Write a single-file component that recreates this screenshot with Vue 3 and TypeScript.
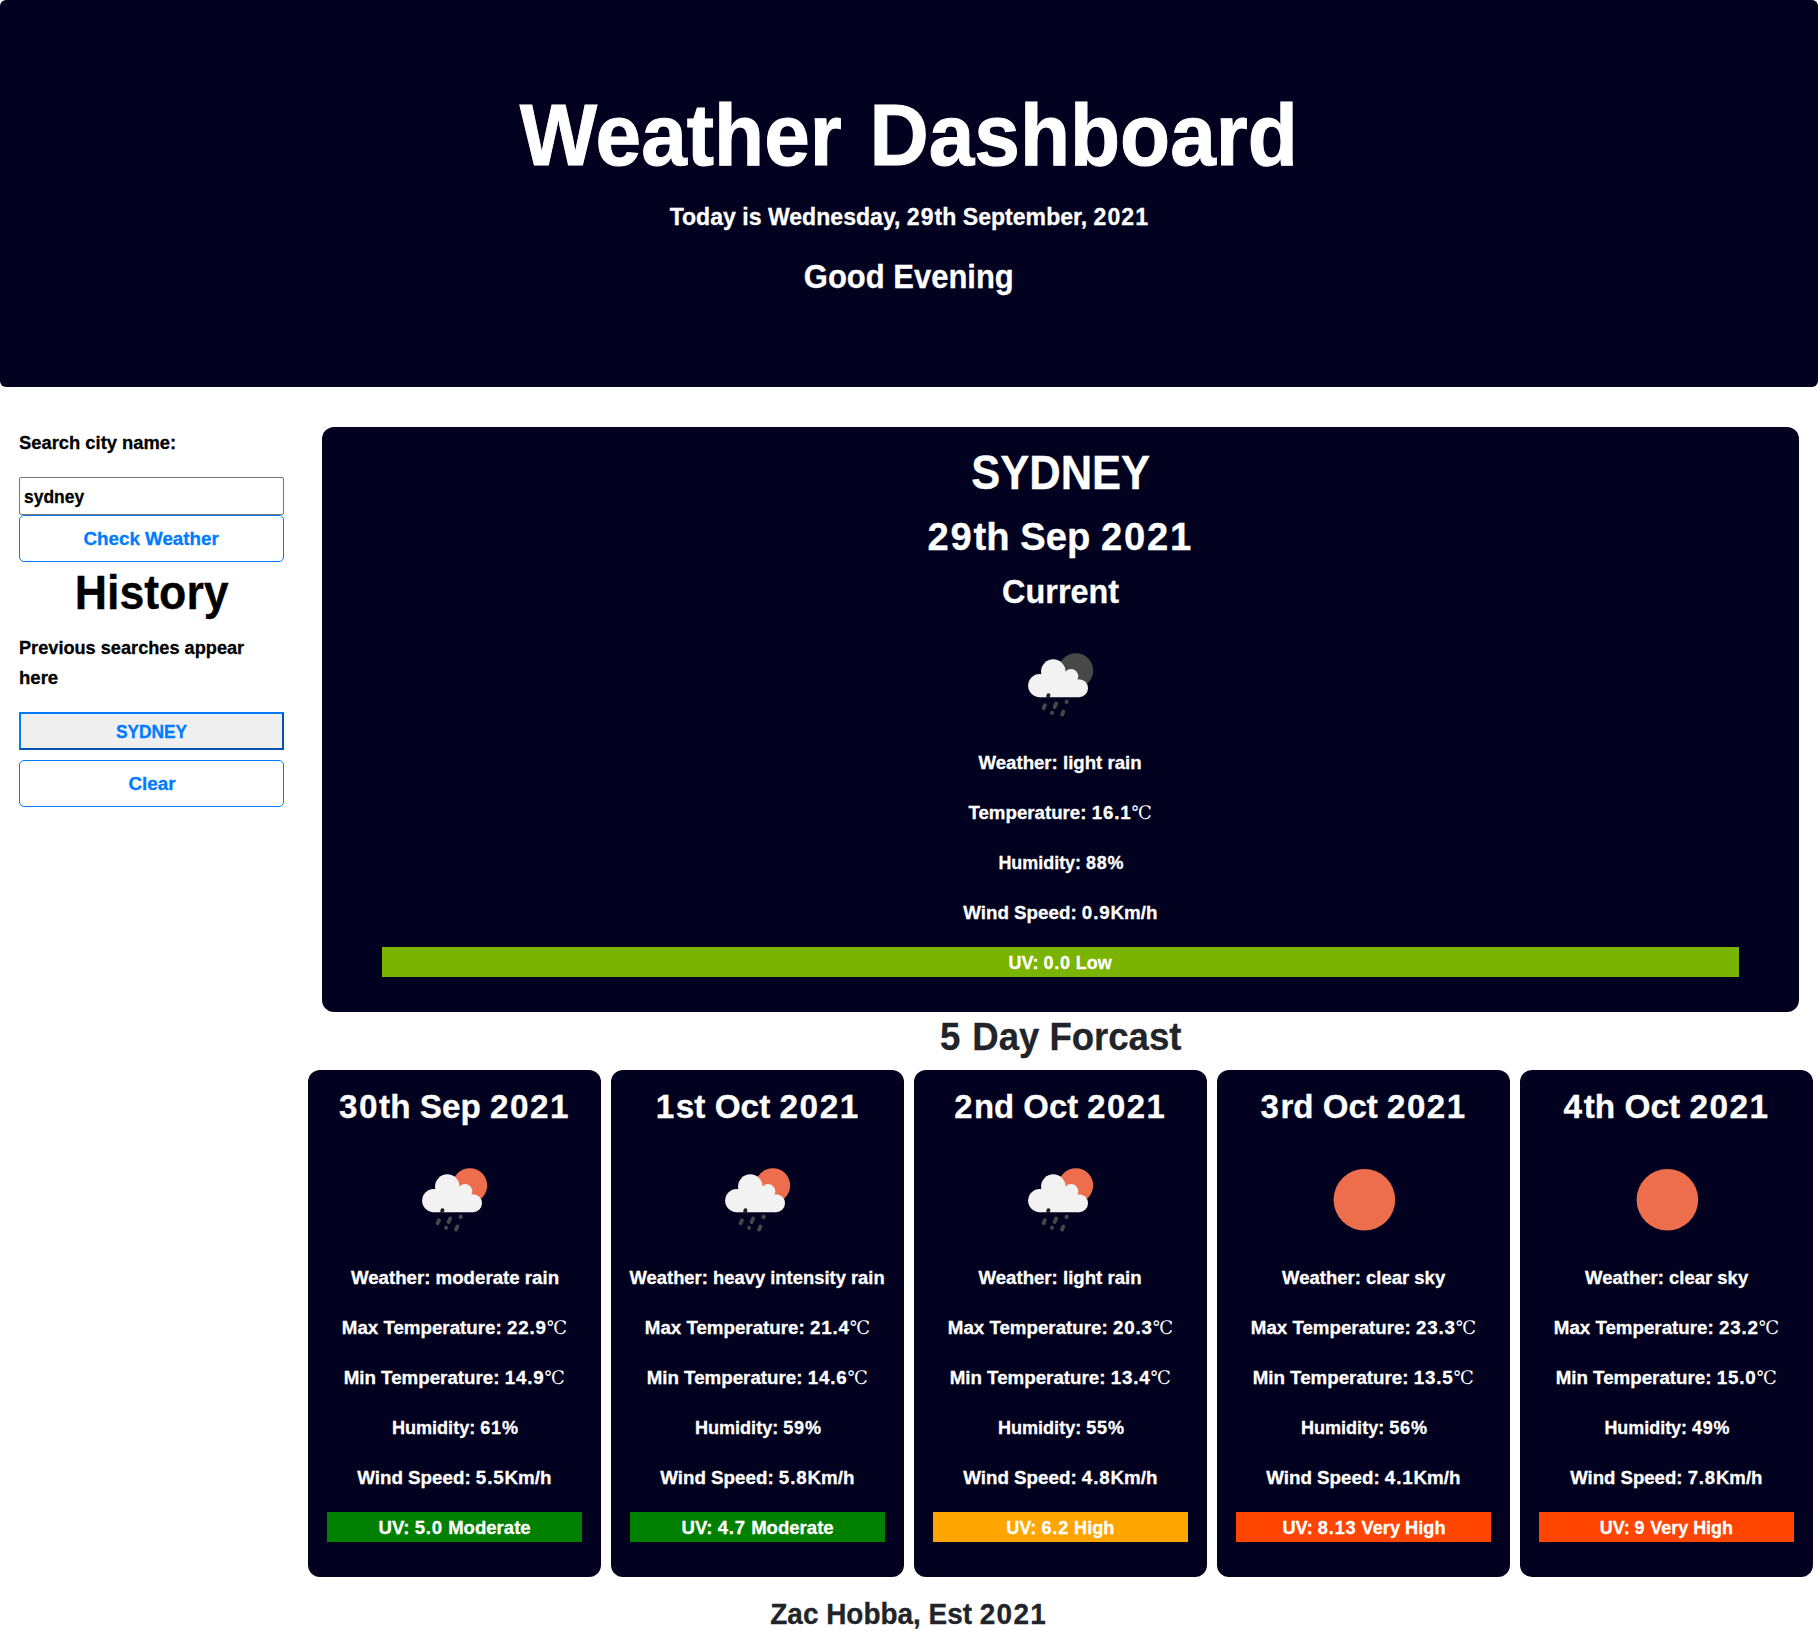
<script setup lang="ts">
import { h } from 'vue'
import type { Directive, FunctionalComponent } from 'vue'

interface Line {
  text: string
  width: number
  unit?: string
}

interface Day {
  title: Line
  icon: 'rain' | 'clear'
  lines: Line[]
  uv: Line
  color: string
}

// Condenses or widens a line of text so that it takes up the given width.
const vFit: Directive<HTMLElement, number> = {
  mounted(el, binding) {
    const size = parseFloat(getComputedStyle(el).fontSize)
    const natural = el.getBoundingClientRect().width
    const target = binding.value + size * 0.06
    el.style.transform = `scaleX(${(target / natural).toFixed(4)})`
  },
}

// A line of text whose figures are set a little wider than its letters.
const TextLine: FunctionalComponent<{ text: string; unit?: string }> = (props) =>
  h('span', { class: 'fit' }, [
    ...props.text
      .split(/(\d[\d.]*)/)
      .filter(Boolean)
      .map((part) => (/^\d/.test(part) ? h('span', { class: 'num' }, part) : part)),
    props.unit ? h('span', { class: 'unit' }, props.unit) : null,
  ])
TextLine.props = ['text', 'unit']

const current: Line[] = [
  { text: 'Weather: light rain', width: 162 },
  { text: 'Temperature: 16.1', width: 182, unit: '℃' },
  { text: 'Humidity: 88%', width: 124 },
  { text: 'Wind Speed: 0.9Km/h', width: 193 },
]

const days: Day[] = [
  {
    title: { text: '30th Sep 2021', width: 229 },
    icon: 'rain',
    lines: [
      { text: 'Weather: moderate rain', width: 207 },
      { text: 'Max Temperature: 22.9', width: 224, unit: '℃' },
      { text: 'Min Temperature: 14.9', width: 220, unit: '℃' },
      { text: 'Humidity: 61%', width: 125 },
      { text: 'Wind Speed: 5.5Km/h', width: 193 },
    ],
    uv: { text: 'UV: 5.0 Moderate', width: 151 },
    color: 'green',
  },
  {
    title: { text: '1st Oct 2021', width: 202 },
    icon: 'rain',
    lines: [
      { text: 'Weather: heavy intensity rain', width: 254 },
      { text: 'Max Temperature: 21.4', width: 224, unit: '℃' },
      { text: 'Min Temperature: 14.6', width: 220, unit: '℃' },
      { text: 'Humidity: 59%', width: 125 },
      { text: 'Wind Speed: 5.8Km/h', width: 193 },
    ],
    uv: { text: 'UV: 4.7 Moderate', width: 151 },
    color: 'green',
  },
  {
    title: { text: '2nd Oct 2021', width: 210 },
    icon: 'rain',
    lines: [
      { text: 'Weather: light rain', width: 162 },
      { text: 'Max Temperature: 20.3', width: 224, unit: '℃' },
      { text: 'Min Temperature: 13.4', width: 220, unit: '℃' },
      { text: 'Humidity: 55%', width: 125 },
      { text: 'Wind Speed: 4.8Km/h', width: 193 },
    ],
    uv: { text: 'UV: 6.2 High', width: 107 },
    color: 'orange',
  },
  {
    title: { text: '3rd Oct 2021', width: 204 },
    icon: 'clear',
    lines: [
      { text: 'Weather: clear sky', width: 162 },
      { text: 'Max Temperature: 23.3', width: 224, unit: '℃' },
      { text: 'Min Temperature: 13.5', width: 220, unit: '℃' },
      { text: 'Humidity: 56%', width: 125 },
      { text: 'Wind Speed: 4.1Km/h', width: 193 },
    ],
    uv: { text: 'UV: 8.13 Very High', width: 162 },
    color: 'orangered',
  },
  {
    title: { text: '4th Oct 2021', width: 204 },
    icon: 'clear',
    lines: [
      { text: 'Weather: clear sky', width: 162 },
      { text: 'Max Temperature: 23.2', width: 224, unit: '℃' },
      { text: 'Min Temperature: 15.0', width: 220, unit: '℃' },
      { text: 'Humidity: 49%', width: 124 },
      { text: 'Wind Speed: 7.8Km/h', width: 191 },
    ],
    uv: { text: 'UV: 9 Very High', width: 132 },
    color: 'orangered',
  },
]
</script>

<template>
  <div class="page">
    <svg class="defs" width="0" height="0">
      <symbol id="cloud-rain" viewBox="0 0 100 100">
        <g fill="#f2f2f2">
          <circle cx="29.7" cy="63.1" r="11.6" />
          <circle cx="43.3" cy="49.1" r="12.3" />
          <circle cx="61" cy="53.9" r="7.3" />
          <circle cx="69" cy="65.7" r="9" />
          <path d="M29.7 74.7V58L43 50l18 3 8 8v13.7z" />
        </g>
        <g stroke="#484848" stroke-width="3.8" stroke-linecap="round">
          <path d="M34.9 82.7 33.6 85.8M46.2 81 44.6 84.6M56.8 79.1 56.5 79.7M42.1 90.1v.3M53.4 89 52.1 92" />
          <path d="M38.5 72.6 38.1 73.8" stroke="#222" />
        </g>
      </symbol>
    </svg>

    <header class="jumbotron">
      <h1><TextLine v-fit="773" text="Weather Dashboard" /></h1>
      <p class="lead"><TextLine v-fit="478" text="Today is Wednesday, 29th September, 2021" /></p>
      <h3><TextLine v-fit="208" text="Good Evening" /></h3>
    </header>

    <div class="row">
      <aside class="side">
        <p><TextLine v-fit="156" class="low-line" text="Search city name:" /></p>
        <div class="input"><TextLine v-fit="59" text="sydney" /></div>
        <button class="btn"><TextLine v-fit="134" text="Check Weather" /></button>
        <h1><TextLine v-fit="151" class="low-line" text="History" /></h1>
        <p>
          <TextLine v-fit="224" class="low-line" text="Previous searches appear" /><br />
          <TextLine v-fit="38" class="low-line" text="here" />
        </p>
        <button class="city"><TextLine v-fit="70" class="low-line" text="SYDNEY" /></button>
        <button class="btn"><TextLine v-fit="46" text="Clear" /></button>
      </aside>

      <main class="main">
        <section class="card today">
          <h1><TextLine v-fit="176" text="SYDNEY" /></h1>
          <h2><TextLine v-fit="263" text="29th Sep 2021" /></h2>
          <h3><TextLine v-fit="115" text="Current" /></h3>
          <div class="icon">
            <svg width="100" height="100" viewBox="0 0 100 100">
              <circle cx="65.9" cy="48" r="17.3" fill="#484848" />
              <use href="#cloud-rain" />
            </svg>
          </div>
          <p v-for="l in current" :key="l.text">
            <TextLine v-fit="l.width" :text="l.text" :unit="l.unit" />
          </p>
          <p class="uv low"><TextLine v-fit="102" text="UV: 0.0 Low" /></p>
        </section>

        <h2 class="forecast-title"><TextLine v-fit="239" class="low-line" text="5 Day Forcast" /></h2>

        <div class="forecast">
          <section v-for="d in days" :key="d.title.text" class="card">
            <h3><TextLine v-fit="d.title.width" :text="d.title.text" /></h3>
            <div class="icon">
              <svg width="100" height="100" viewBox="0 0 100 100">
                <template v-if="d.icon === 'rain'">
                  <circle cx="65.9" cy="48" r="17.3" fill="#ec6e4c" />
                  <use href="#cloud-rain" />
                </template>
                <circle v-else cx="51.4" cy="62.2" r="30.8" fill="#ec6e4c" />
              </svg>
            </div>
            <p v-for="l in d.lines" :key="l.text">
              <TextLine v-fit="l.width" :text="l.text" :unit="l.unit" />
            </p>
            <p class="uv" :style="{ backgroundColor: d.color }">
              <TextLine v-fit="d.uv.width" :text="d.uv.text" />
            </p>
          </section>
        </div>
      </main>
    </div>

    <footer><TextLine v-fit="275" text="Zac Hobba, Est 2021" /></footer>
  </div>
</template>

<style>
body {
  margin: 0;
  background: #fff;
}
</style>

<style scoped>
.page {
  font-family: "Liberation Sans", Arial, sans-serif;
  font-weight: 700;
  font-size: 19.2px;
  line-height: 30px;
  color: #212529;
  height: 1642px;
  overflow: hidden;
}
.page * {
  box-sizing: border-box;
}
.defs {
  position: absolute;
}
.fit {
  display: inline-block;
  line-height: 1;
  white-space: nowrap;
  -webkit-text-stroke: 0.3px currentColor;
}
.fit :deep(.num) {
  letter-spacing: 0.045em;
}
.fit :deep(.unit) {
  font-family: "DejaVu Serif", serif;
  font-size: 18.5px;
  font-weight: 400;
  line-height: 1;
  -webkit-text-stroke: 0;
}
h1,
h2,
h3 {
  margin: 0 0 10px;
  text-align: center;
}
h1 {
  font-size: 48px;
  line-height: 60px;
  height: 60px;
}
h2 {
  font-size: 38.4px;
  line-height: 48px;
  height: 48px;
}
h3 {
  font-size: 33.6px;
  line-height: 42px;
  height: 42px;
}
p {
  margin: 0 0 20px;
}
.jumbotron {
  height: 387.4px;
  padding-top: 80px;
  margin-bottom: 40px;
  background: #020220;
  color: #fff;
  border-radius: 6px;
  text-align: center;
}
.jumbotron h1 {
  height: 108px;
  font-size: 87px;
  line-height: 109px;
  word-spacing: 0.06em;
}
.jumbotron h1 .fit {
  -webkit-text-stroke-width: 1px;
}
.lead {
  font-size: 24px;
  line-height: 37.5px;
}
.row {
  display: flex;
}
.side {
  width: 303px;
  padding: 0 19px;
  color: #000;
}
.side p .fit,
.input .fit {
  transform-origin: left center;
}
.low-line,
.card .fit {
  vertical-align: -1px;
}
.card .fit {
  margin: 0 -20px;
}
.card p {
  height: 30px;
}
.input {
  height: 38px;
  border: 1px solid #767676;
  border-radius: 2px;
  padding: 0 4px;
  line-height: 37px;
}
button {
  display: block;
  width: 100%;
  padding: 0;
  font: inherit;
  color: #007bff;
  text-align: center;
}
.btn {
  height: 47px;
  background: #fff;
  border: 1px solid #007bff;
  border-radius: 5px;
}
.city {
  height: 38px;
  margin-bottom: 10px;
  background: #efefef;
  border: 2px solid;
  border-color: #007bff #0055b0 #0055b0 #007bff;
}
.main {
  width: 1515px;
}
.card {
  background: #020220;
  color: #fff;
  border-radius: 12px;
  padding: 15px 19px;
  text-align: center;
  height: 507px;
}
.today {
  height: 585px;
  margin: 0 19px;
  padding: 15px 60px;
}
.icon {
  height: 105px;
  margin-bottom: 20px;
}
.icon svg {
  display: block;
  margin: 0 auto;
  transform: translate(-1px, 0.5px);
}
.low {
  background: #7ab300;
}
.forecast {
  display: flex;
}
.forecast .card {
  width: 293px;
  margin: 0 5px;
}
footer {
  margin-top: 19px;
  font-size: 28.8px;
  line-height: 36px;
  text-align: center;
}
</style>
